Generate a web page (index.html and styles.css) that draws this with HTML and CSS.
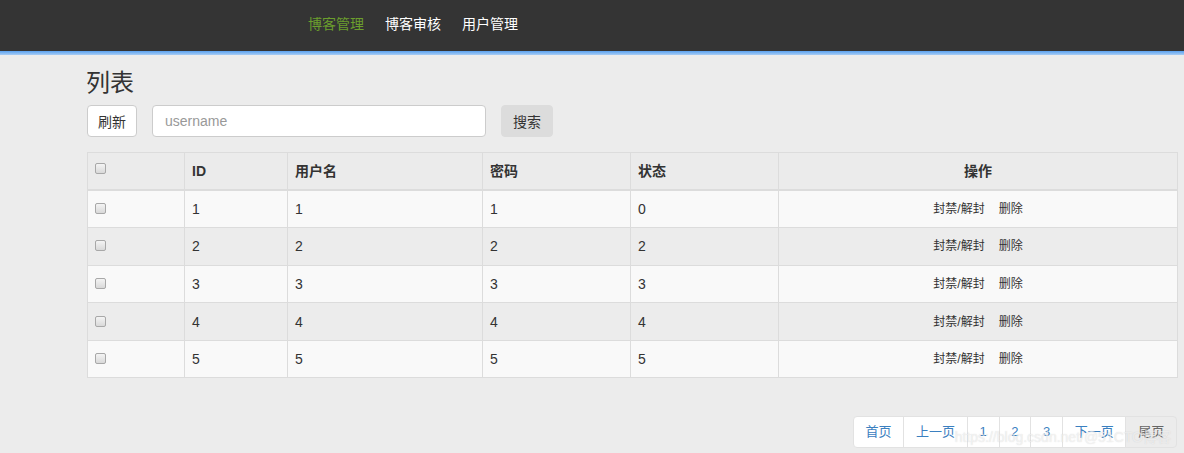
FILE: index.html
```html
<!DOCTYPE html>
<html lang="zh">
<head>
<meta charset="utf-8">
<title>列表</title>
<link rel="stylesheet" href="styles.css">
</head>
<body>
<header class="navbar">
  <nav class="nav">
    <a class="nav-link active">博客管理</a>
    <a class="nav-link">博客审核</a>
    <a class="nav-link">用户管理</a>
  </nav>
</header>
<div class="nav-line"></div>
<main class="container">
  <h1 class="title">列表</h1>
  <div class="toolbar">
    <button class="btn btn-white">刷新</button>
    <input class="search-input" type="text" placeholder="username">
    <button class="btn btn-gray">搜索</button>
  </div>
  <table class="table">
    <colgroup>
      <col class="c-check"><col class="c-id"><col class="c-name"><col class="c-pwd"><col class="c-status"><col class="c-op">
    </colgroup>
    <thead>
      <tr><th><span class="chk chk-head"></span></th><th>ID</th><th>用户名</th><th>密码</th><th>状态</th><th class="center">操作</th></tr>
    </thead>
    <tbody>
      <tr><td><span class="chk"></span></td><td>1</td><td>1</td><td>1</td><td>0</td><td class="center ops"><a>封禁/解封</a><a>删除</a></td></tr>
      <tr><td><span class="chk"></span></td><td>2</td><td>2</td><td>2</td><td>2</td><td class="center ops"><a>封禁/解封</a><a>删除</a></td></tr>
      <tr><td><span class="chk"></span></td><td>3</td><td>3</td><td>3</td><td>3</td><td class="center ops"><a>封禁/解封</a><a>删除</a></td></tr>
      <tr><td><span class="chk"></span></td><td>4</td><td>4</td><td>4</td><td>4</td><td class="center ops"><a>封禁/解封</a><a>删除</a></td></tr>
      <tr><td><span class="chk"></span></td><td>5</td><td>5</td><td>5</td><td>5</td><td class="center ops"><a>封禁/解封</a><a>删除</a></td></tr>
    </tbody>
  </table>
  <div class="pager-row">
    <ul class="pagination">
      <li><a>首页</a></li>
      <li><a>上一页</a></li>
      <li><a>1</a></li>
      <li><a>2</a></li>
      <li><a>3</a></li>
      <li><a>下一页</a></li>
      <li class="disabled"><a>尾页</a></li>
    </ul>
    <div class="watermark">https://blog.csdn.net/@51CTO博客</div>
  </div>
</main>
</body>
</html>
```
FILE: styles.css
```css
* { box-sizing: border-box; }
html, body { margin: 0; padding: 0; }
body {
  background: #ececec;
  font-family: "Liberation Sans", Arial, "Noto Sans CJK SC", sans-serif;
  font-size: 14px;
  line-height: 20px;
  color: #333;
  overflow: hidden;
}
.navbar {
  height: 51px;
  background: #343434;
  display: flex;
  align-items: center;
}
.nav {
  display: flex;
  gap: 21px;
  padding-left: 308px;
  padding-bottom: 3px;
}
.nav-link {
  color: #fff;
  font-size: 14px;
  text-decoration: none;
}
.nav-link.active { color: #6b9e2d; }
.nav-line {
  height: 4px;
  background: linear-gradient(#5aa1ef, #a9cdf4);
}
.container {
  padding: 0 7px 0 87px;
}
.title {
  margin: 14px 0 9px -1px;
  font-size: 24px;
  font-weight: 400;
  line-height: 27px;
  color: #333;
}
.toolbar {
  display: flex;
  align-items: center;
  gap: 15px;
  height: 32px;
}
.btn {
  height: 32px;
  padding: 0 10px;
  font-family: inherit;
  font-size: 14px;
  color: #333;
  border-radius: 4px;
  cursor: pointer;
  white-space: nowrap;
  flex: none;
}
.btn-white { background: #fff; border: 1px solid #ccc; }
.btn-gray { background: #dcdcdc; border: 1px solid #dcdcdc; padding: 0 11px; }
.search-input {
  width: 334px;
  height: 32px;
  padding: 0 12px;
  border: 1px solid #ccc;
  border-radius: 4px;
  font-family: inherit;
  font-size: 14px;
  color: #555;
  background: #fff;
  flex: none;
}
.search-input::placeholder { color: #999; }
.table {
  margin-top: 15px;
  width: 1090px;
  border-collapse: collapse;
  table-layout: fixed;
  border: 1px solid #dcdcdc;
}
.c-check { width: 97px; }
.c-id { width: 103px; }
.c-name { width: 195px; }
.c-pwd { width: 148px; }
.c-status { width: 148px; }
.c-op { width: 399px; }
.table th, .table td {
  border: 1px solid #dcdcdc;
  padding: 8px 7px;
  text-align: left;
  vertical-align: middle;
  line-height: 20px;
}
.table th {
  background: #ebebeb;
  font-weight: 700;
  height: 37px;
  border-bottom: 2px solid #dcdcdc;
}
.table td { height: 37.6px; }
.table tbody tr:nth-child(odd) td { background: #f9f9f9; }
.table tbody tr:nth-child(even) td { background: #ececec; }
.table .center { text-align: center; }
.table td.ops { font-size: 12px; }
.ops a {
  color: #333;
  margin: 0 7px;
}
.chk {
  display: inline-block;
  width: 11px;
  height: 11px;
  border: 1px solid #a8a8a8;
  border-radius: 2px;
  background: linear-gradient(#f4f4f4, #d9d9d9);
  vertical-align: top;
  margin-top: 4px;
}
.chk-head { margin-top: 2px; }
.pager-row {
  position: relative;
  display: flex;
  justify-content: flex-end;
  margin-top: 38px;
}
.pagination {
  display: flex;
  list-style: none;
  margin: 0;
  padding: 0;
}
.pagination li a {
  display: block;
  padding: 6px 11.75px;
  font-size: 13px;
  line-height: 18px;
  color: #3b80c0;
  background: #fff;
  border: 1px solid #e2e2e2;
  margin-left: -1px;
  text-decoration: none;
}
.pagination li:first-child a { margin-left: 0; border-radius: 4px 0 0 4px; }
.pagination li:last-child a { border-radius: 0 4px 4px 0; }
.pagination li.disabled a { background: #ececec; color: #666; }
.watermark {
  position: absolute;
  right: 6px;
  top: 11px;
  font-size: 14px;
  color: rgba(255,255,255,0.6);
  text-shadow: 0 0 1px rgba(140,140,140,0.35);
  pointer-events: none;
  white-space: nowrap;
}
```
